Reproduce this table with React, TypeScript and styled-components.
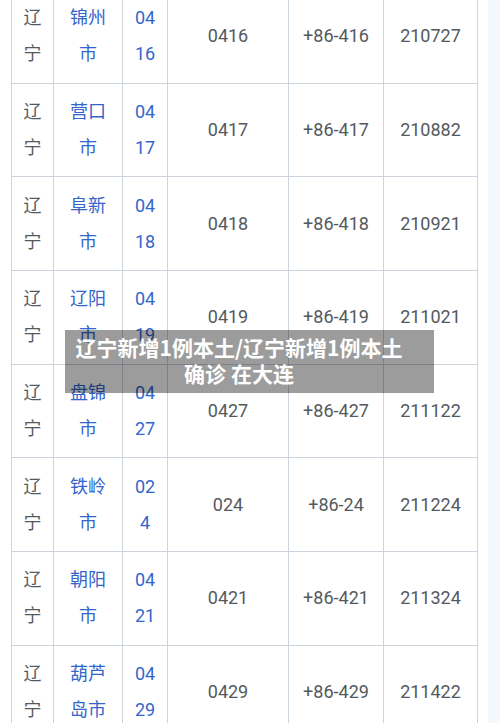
import React from 'react'
import styled, { createGlobalStyle } from 'styled-components'

const GlobalStyle = createGlobalStyle`
  html, body {
    margin: 0;
    padding: 0;
    background: #ffffff;
    overflow: hidden;
  }
  body {
    font-family: Roboto, "Noto Sans CJK SC", sans-serif;
  }
`

const Page = styled.div`
  position: relative;
  display: flex;
  width: 500px;
  height: 723px;
  overflow: hidden;
`

const Main = styled.div`
  width: 488px;
  padding-left: 11px;
  box-sizing: border-box;
`

const SideStrip = styled.div`
  flex: 1;
  background: #f4f8fc;
`

const Table = styled.table`
  margin-top: -11px;
  border-collapse: collapse;
  table-layout: fixed;
  width: 467px;
  color: #54595d;
  font-size: 18px;
`

const Row = styled.tr`
  height: 93.7px;
`

const Cell = styled.td<{ $link?: boolean }>`
  border: 1px solid #cbd3dd;
  padding: 0;
  text-align: center;
  vertical-align: middle;
  line-height: 36px;
  color: ${({ $link }) => ($link ? '#3366cc' : '#54595d')};
`

const Line = styled.div`
  white-space: nowrap;
`

const Caption = styled.div`
  position: absolute;
  left: 65px;
  top: 330px;
  width: 369px;
  height: 63px;
  box-sizing: border-box;
  padding: 4px 30px 0 9px;
  background: rgba(0, 0, 0, 0.39);
  color: #ffffff;
  font-family: "Noto Sans CJK SC", sans-serif;
  font-weight: 700;
  font-size: 21px;
  line-height: 26px;
  text-align: center;
`

const CaptionLine = styled.div`
  white-space: nowrap;
`

interface ICity {
  name: string
  code: string
  phone: string
  post: string
}

const cities: ICity[] = [
  { name: '锦州市', code: '0416', phone: '+86-416', post: '210727' },
  { name: '营口市', code: '0417', phone: '+86-417', post: '210882' },
  { name: '阜新市', code: '0418', phone: '+86-418', post: '210921' },
  { name: '辽阳市', code: '0419', phone: '+86-419', post: '211021' },
  { name: '盘锦市', code: '0427', phone: '+86-427', post: '211122' },
  { name: '铁岭市', code: '024', phone: '+86-24', post: '211224' },
  { name: '朝阳市', code: '0421', phone: '+86-421', post: '211324' },
  { name: '葫芦岛市', code: '0429', phone: '+86-429', post: '211422' }
]

// narrow columns wrap after a fixed number of characters
const chunks = (s: string, size: number) => {
  const chars = Array.from(s)
  const out: string[] = []
  for (let i = 0; i < chars.length; i += size) out.push(chars.slice(i, i + size).join(''))
  return out
}

const Stacked: React.FC<{ text: string; size?: number }> = ({ text, size = 2 }) => (
  <>
    {chunks(text, size).map((part, i) => (
      <Line key={i}>{part}</Line>
    ))}
  </>
)

export default function App() {
  return (
    <Page>
      <GlobalStyle />
      <Main>
        <Table>
          <colgroup>
            <col style={{ width: 42 }} />
            <col style={{ width: 69 }} />
            <col style={{ width: 45 }} />
            <col style={{ width: 121 }} />
            <col style={{ width: 95 }} />
            <col style={{ width: 94 }} />
          </colgroup>
          <tbody>
            {cities.map(city => (
              <Row key={city.name}>
                <Cell>
                  <Stacked text="辽宁" size={1} />
                </Cell>
                <Cell $link>
                  <Stacked text={city.name} />
                </Cell>
                <Cell $link>
                  <Stacked text={city.code} />
                </Cell>
                <Cell>{city.code}</Cell>
                <Cell>{city.phone}</Cell>
                <Cell>{city.post}</Cell>
              </Row>
            ))}
          </tbody>
        </Table>
      </Main>
      <SideStrip />
      <Caption>
        <CaptionLine>辽宁新增1例本土/辽宁新增1例本土</CaptionLine>
        <CaptionLine>确诊 在大连</CaptionLine>
      </Caption>
    </Page>
  )
}
